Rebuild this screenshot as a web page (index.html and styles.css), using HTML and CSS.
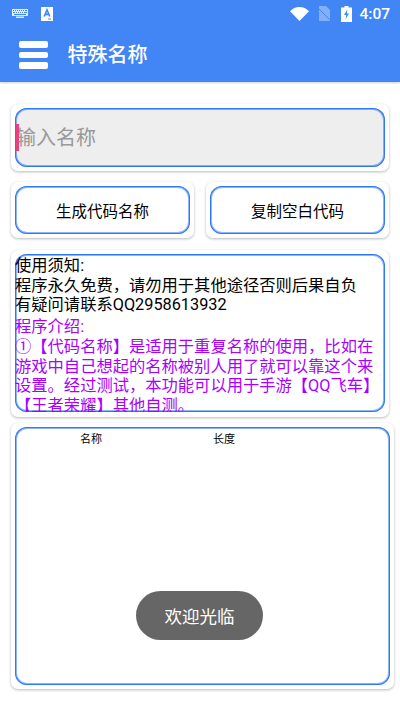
FILE: index.html
```html
<!DOCTYPE html>
<html lang="zh">
<head>
<meta charset="utf-8">
<title>特殊名称</title>
<link rel="stylesheet" href="styles.css">
</head>
<body>
<header class="appbar">
  <div class="status">
    <svg class="kbd" viewBox="0 0 16 9" width="16" height="9"><path fill="#fff" opacity=".85" d="M0 0h16v7H0z M4 7.600h8V9H4z"/><path fill="#4285f4" d="M1 1h1v1H1zM3 1h1v1H3zM5 1h1v1H5zM7 1h1v1H7zM9 1h1v1H9zM11 1h1v1h-1zM13 1h2v1h-2zM1 3h2v1H1zM4 3h1v1H4zM6 3h1v1H6zM8 3h1v1H8zM10 3h1v1h-1zM12 3h3v1h-3zM2 5h12v1H2z"/></svg>
    <svg class="note" viewBox="0 0 12 14" width="12" height="14"><path fill="#fff" d="M0 0h12v14H0z"/><path fill="none" stroke="#4285f4" stroke-width="1.600" d="M3.200 9.500 6 2.800l2.800 6.700M4.200 7.400h3.600"/><path fill="#4285f4" d="M7 11.500h3v1H7z"/></svg>
    <span class="spacer"></span>
    <svg class="wifi" viewBox="0 0 19 14" width="19" height="14"><path fill="#fff" d="M0 4.200C2.600 1.600 5.800 0 9.500 0S16.400 1.600 19 4.200L9.500 14z"/></svg>
    <svg class="sim" viewBox="0 0 14 15" width="14" height="15"><path fill="#fff" opacity=".35" d="M2 0h7l4 4v11H2z"/><path stroke="#4285f4" stroke-width="1" d="M0 1l14 14"/></svg>
    <svg class="battery" viewBox="0 0 11 16" width="11" height="16"><path fill="#fff" d="M3.500 0h4v1.500H11V16H0V1.500h3.500z"/><path fill="#4285f4" d="M6.300 3.500 3 9h2.200l-.6 4.200L8 7.400H5.800z"/></svg>
    <span class="clock">4:07</span>
  </div>
  <div class="titlebar">
    <div class="burger"><i></i><i></i><i></i></div>
    <h1>特殊名称</h1>
  </div>
</header>
<main class="page">
  <section class="card">
    <div class="frame field"><span class="caret"></span><span class="placeholder">输入名称</span></div>
  </section>
  <div class="actions">
    <section class="card"><button class="frame btn">生成代码名称</button></section>
    <section class="card"><button class="frame btn">复制空白代码</button></section>
  </div>
  <section class="card info">
    <div class="frame notice">
      <p class="black">使用须知:<br>程序永久免费，请勿用于其他途径否则后果自负<br>有疑问请联系QQ2958613932</p>
      <p class="purple">程序介绍:<br>①【代码名称】是适用于重复名称的使用，比如在游戏中自己想起的名称被别人用了就可以靠这个来设置。经过测试，本功能可以用于手游【QQ飞车】【王者荣耀】其他自测。</p>
    </div>
  </section>
  <section class="card wide">
    <div class="frame table">
      <span class="col-name">名称</span>
      <span class="col-len">长度</span>
    </div>
  </section>
</main>
<div class="toast">欢迎光临</div>
</body>
</html>
```
FILE: styles.css
```css
* { box-sizing: border-box; }
html, body { margin: 0; height: 711px; overflow: hidden; background: #fff; }
body { font-family: "Roboto", "Noto Sans CJK SC", sans-serif; position: relative; color: #000; }

.appbar { background: #4285f4; height: 82px; box-shadow: 0 1px 2px rgba(0,0,0,.2); }
.status { height: 25px; display: flex; align-items: center; padding: 2px 10px 0 12px; }
.kbd { margin-right: 13px; }
.spacer { flex: 1; }
.wifi { margin-right: 8px; }
.sim { margin-right: 10px; }
.battery { margin-right: 7px; }
.clock { font: 500 15.500px "Roboto", sans-serif; color: #fff; }

.titlebar { height: 57px; display: flex; align-items: center; padding: 3px 0 0 19px; }
.burger { width: 29px; display: flex; flex-direction: column; gap: 3.500px; }
.burger i { display: block; height: 6.700px; background: #fff; border-radius: 2px; }
h1 { margin: 0 0 0 19.500px; font-size: 20px; font-weight: 500; color: #fff; line-height: 28px; }

.page { padding: 22px 11px 0; display: flex; flex-direction: column; gap: 11px; }
.card { background: #fff; border-radius: 7px; padding: 4px; box-shadow: 0 1px 3px rgba(0,0,0,.28); }
.frame { display: block; width: 100%; border: 0; border-radius: 12px; background: #fff; box-shadow: inset 0 0 0 1px #2f78f5, inset 0 0 0 2px rgba(47,120,245,.55); }

.field { height: 59px; background: #eee; display: flex; align-items: center; position: relative; }
.caret { position: absolute; left: 1px; top: 16px; width: 3px; height: 27px; background: #e8417f; }
.placeholder { font-size: 20px; color: #999; line-height: 28px; margin-left: 1px; }

.actions { display: flex; gap: 12px; }
.actions .card { flex: 1; }
.btn { height: 48px; padding: 0; font-family: inherit; font-size: 15.500px; color: #000; }

.info { margin-top: 1px; padding: 4px 4px 5px; }
.notice { height: 158px; overflow: hidden; font-size: 16.300px; line-height: 19.700px; }
.notice p { margin: 0; }
.notice .black { padding-top: 2px; }
.notice .purple { color: #aa00ff; padding-top: 2px; }

.wide { width: 383px; margin-top: -5px; }
.table { height: 258px; position: relative; display: flex; font-size: 11px; line-height: 16px; padding: 5px 0 0 65px; }
.col-name { width: 133px; }

.toast { position: absolute; left: 136px; top: 591px; width: 127px; height: 49px; border-radius: 25px; background: #666; color: #fff; font-size: 17.500px; display: flex; align-items: center; justify-content: center; }
```
